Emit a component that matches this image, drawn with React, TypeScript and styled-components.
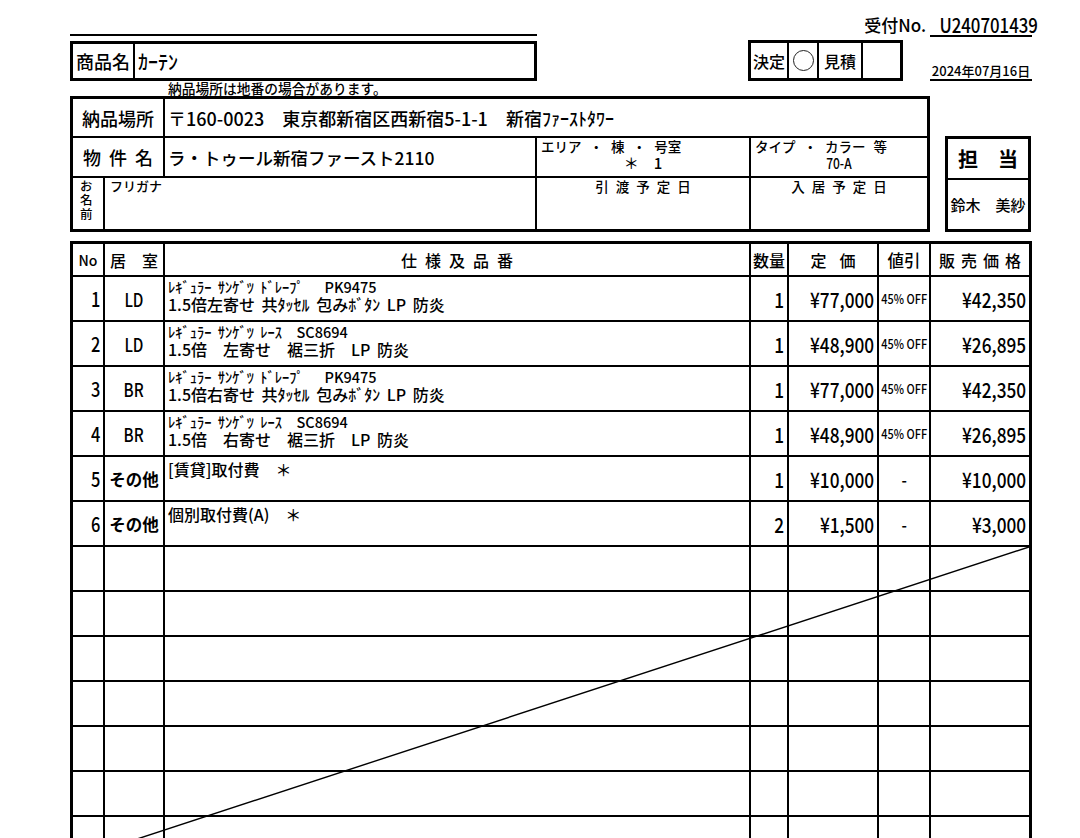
import React from "react";
import styled, { createGlobalStyle } from "styled-components";

const CJK = `"Noto Sans CJK JP", "Noto Sans", sans-serif`;

const GlobalStyle = createGlobalStyle`
  html, body { margin: 0; padding: 0; background: #fff; }
  body { font-family: ${CJK}; font-weight: 500; color: #000; }
  *, *::before, *::after { box-sizing: border-box; }
`;

/* condensed rendering of Latin figures, like the narrow gothic of the print form */
const Narrow = styled.span<{ $scale?: number; $origin?: string }>`
  display: inline-block;
  white-space: nowrap;
  transform: scaleX(${(p) => p.$scale ?? 0.82});
  transform-origin: ${(p) => p.$origin ?? "right"} center;
`;

const Page = styled.main`
  width: 962px;
  margin-left: 70px;
  padding-bottom: 24px;
`;

/* ---------- header ---------- */
const Header = styled.header`
  display: flex;
  justify-content: space-between;
  height: 96px;
`;

const HeaderLeft = styled.div`
  width: 467px;
  padding-top: 34px;
`;

const TopRule = styled.div`
  height: 2px;
  background: #000;
  margin-bottom: 5px;
`;

const ProductBox = styled.div`
  display: flex;
  height: 40px;
  border: 3px solid #000;
`;

const ProductLabel = styled.div`
  width: 62px;
  border-right: 2px solid #000;
  display: flex;
  align-items: center;
  justify-content: center;
  font-size: 18px;
`;

const ProductValue = styled.div`
  flex: 1;
  display: flex;
  align-items: center;
  padding-left: 3px;
  font-size: 20px;
`;

const Note = styled.div`
  height: 15px;
  line-height: 15px;
  padding-left: 98px;
  font-size: 13.75px;
  white-space: nowrap;
`;

const HeaderRight = styled.div`
  width: 284px;
  display: flex;
  flex-direction: column;
`;

const ReceiptLine = styled.div`
  height: 40px;
  display: flex;
  justify-content: flex-end;
  align-items: flex-end;
  padding-bottom: 3px;
`;

const ReceiptLabel = styled.span`
  font-size: 17px;
  line-height: 20px;
  margin: 0 4px 2px 0;
`;

const ReceiptValue = styled.span`
  width: 102px;
  border-bottom: 2px solid #000;
  text-align: center;
  font-size: 20px;
  line-height: 21px;
`;

const DecisionRow = styled.div`
  height: 41px;
  display: flex;
  justify-content: space-between;
  align-items: flex-start;
`;

const DecisionBox = styled.div`
  width: 155px;
  height: 41px;
  border: 3px solid #000;
  background: #000;
  display: grid;
  grid-template-columns: 36px 28px 42px minmax(0, 1fr);
  column-gap: 2px;
`;

const DecisionCell = styled.div`
  background: #fff;
  display: flex;
  align-items: center;
  justify-content: center;
  font-size: 16px;
`;

const Circle = styled.span`
  width: 21px;
  height: 21px;
  border: 1px solid #222;
  border-radius: 50%;
`;

const DateLine = styled.div`
  align-self: flex-end;
  width: 102px;
  border-bottom: 2px solid #000;
  text-align: center;
  font-size: 13px;
  line-height: 16px;
  white-space: nowrap;
`;

/* ---------- info block ---------- */
const InfoSection = styled.section`
  display: flex;
  align-items: flex-start;
`;

const InfoGrid = styled.div`
  width: 860px;
  height: 136px;
  border: 3px solid #000;
  background: #000;
  display: grid;
  grid-template-columns: 30px 58px 370px 212px minmax(0, 1fr);
  grid-template-rows: 37px 38px minmax(0, 1fr);
  gap: 2px;
`;

const FieldLabel = styled.div<{ $tracking?: number }>`
  grid-column: span 2;
  background: #fff;
  display: flex;
  align-items: center;
  justify-content: center;
  font-size: 18px;
  white-space: nowrap;
  letter-spacing: ${(p) => p.$tracking ?? 0}px;
  padding-left: ${(p) => p.$tracking ?? 0}px;
`;

const FieldValue = styled.div<{ $span: number; $size: number }>`
  grid-column: span ${(p) => p.$span};
  background: #fff;
  display: flex;
  align-items: center;
  padding-left: 3px;
  font-size: ${(p) => p.$size}px;
  white-space: pre;
`;

const SubField = styled.div`
  background: #fff;
  display: flex;
  flex-direction: column;
`;

const SubCaption = styled.div<{ $center?: boolean; $tracking?: number }>`
  font-size: 13.5px;
  line-height: 16px;
  white-space: pre;
  word-spacing: 5px;
  text-align: ${(p) => (p.$center ? "center" : "left")};
  padding-left: ${(p) => (p.$center ? p.$tracking ?? 0 : 4)}px;
  letter-spacing: ${(p) => p.$tracking ?? 0}px;
`;

const SubValue = styled.div`
  text-align: center;
  font-size: 15px;
  line-height: 18px;
  white-space: pre;
`;

const NameLabel = styled.div`
  background: #fff;
  display: flex;
  flex-direction: column;
  padding: 1px 0 0 7px;
  font-size: 12.5px;
  line-height: 14px;
`;

const Furigana = styled.div`
  grid-column: span 2;
  background: #fff;
  padding-left: 5px;
  font-size: 13px;
  line-height: 16px;
`;

const StaffBox = styled.aside`
  width: 86px;
  height: 96px;
  margin: 40px 0 0 15px;
  border: 3px solid #000;
  background: #000;
  display: grid;
  grid-template-rows: 39px minmax(0, 1fr);
  row-gap: 2px;
`;

const StaffTitle = styled.div`
  background: #fff;
  display: flex;
  align-items: center;
  justify-content: center;
  font-size: 20px;
  font-weight: 700;
  white-space: pre;
`;

const StaffName = styled.div`
  background: #fff;
  display: flex;
  align-items: center;
  justify-content: center;
  font-size: 15px;
  white-space: pre;
`;

/* ---------- items table ---------- */
const Table = styled.div`
  position: relative;
  margin-top: 9px;
  border: 3px solid #000;
  background: #000;
  display: grid;
  grid-template-columns: 30px 58px 584px 36px 88px 50px minmax(0, 1fr);
  grid-template-rows: 31px;
  grid-auto-rows: 43px;
  gap: 2px;
`;

const HeadCell = styled.div<{ $size?: number; $tracking?: number }>`
  background: #fff;
  display: flex;
  align-items: center;
  justify-content: center;
  font-size: ${(p) => p.$size ?? 16}px;
  letter-spacing: ${(p) => p.$tracking ?? 0}px;
  padding-left: ${(p) => p.$tracking ?? 0}px;
  white-space: pre;
`;

const NumCell = styled.div<{ $size?: number }>`
  background: #fff;
  display: flex;
  align-items: center;
  justify-content: flex-end;
  padding-right: 3px;
  font-size: ${(p) => p.$size ?? 21}px;
  white-space: nowrap;
`;

const RoomCell = styled.div<{ $jp?: boolean }>`
  background: #fff;
  display: flex;
  align-items: center;
  justify-content: center;
  font-size: ${(p) => (p.$jp ? 16.5 : 19)}px;
  font-weight: ${(p) => (p.$jp ? 700 : 500)};
  white-space: nowrap;
`;

const SpecCell = styled.div`
  background: #fff;
  display: flex;
  flex-direction: column;
  padding: 2px 0 0 3px;
`;

const SpecLine = styled.div<{ $size: number; $lh: number }>`
  font-size: ${(p) => p.$size}px;
  line-height: ${(p) => p.$lh}px;
  white-space: pre;
  word-spacing: 3px;
`;

const DiscountCell = styled.div<{ $small?: boolean }>`
  background: #fff;
  display: flex;
  align-items: center;
  justify-content: center;
  font-size: ${(p) => (p.$small ? 13 : 18)}px;
  white-space: nowrap;
`;

const EmptyCell = styled.div`
  background: #fff;
`;

const Strike = styled.svg`
  position: absolute;
  grid-column: 1 / -1;
  grid-row: 8 / span 7;
  inset: 0;
  width: 100%;
  height: 100%;
  display: block;
  pointer-events: none;
`;

type Item = {
  no: string;
  room: string;
  lines: string[];
  qty: string;
  price: string;
  discount: string;
  total: string;
};

const items: Item[] = [
  {
    no: "1",
    room: "LD",
    lines: ["ﾚｷﾞｭﾗｰ ｻﾝｹﾞﾂ ﾄﾞﾚｰﾌﾟ　 PK9475", "1.5倍左寄せ 共ﾀｯｾﾙ 包みﾎﾞﾀﾝ LP 防炎"],
    qty: "1",
    price: "¥77,000",
    discount: "45% OFF",
    total: "¥42,350",
  },
  {
    no: "2",
    room: "LD",
    lines: ["ﾚｷﾞｭﾗｰ ｻﾝｹﾞﾂ ﾚｰｽ　SC8694", "1.5倍　左寄せ　裾三折　LP 防炎"],
    qty: "1",
    price: "¥48,900",
    discount: "45% OFF",
    total: "¥26,895",
  },
  {
    no: "3",
    room: "BR",
    lines: ["ﾚｷﾞｭﾗｰ ｻﾝｹﾞﾂ ﾄﾞﾚｰﾌﾟ　 PK9475", "1.5倍右寄せ 共ﾀｯｾﾙ 包みﾎﾞﾀﾝ LP 防炎"],
    qty: "1",
    price: "¥77,000",
    discount: "45% OFF",
    total: "¥42,350",
  },
  {
    no: "4",
    room: "BR",
    lines: ["ﾚｷﾞｭﾗｰ ｻﾝｹﾞﾂ ﾚｰｽ　SC8694", "1.5倍　右寄せ　裾三折　LP 防炎"],
    qty: "1",
    price: "¥48,900",
    discount: "45% OFF",
    total: "¥26,895",
  },
  {
    no: "5",
    room: "その他",
    lines: ["[賃貸]取付費　＊"],
    qty: "1",
    price: "¥10,000",
    discount: "-",
    total: "¥10,000",
  },
  {
    no: "6",
    room: "その他",
    lines: ["個別取付費(A)　＊"],
    qty: "2",
    price: "¥1,500",
    discount: "-",
    total: "¥3,000",
  },
];

const EMPTY_ROWS = 7;

export default function App() {
  return (
    <>
      <GlobalStyle />
      <Page>
        <Header>
          <HeaderLeft>
            <TopRule />
            <ProductBox>
              <ProductLabel>商品名</ProductLabel>
              <ProductValue>ｶｰﾃﾝ</ProductValue>
            </ProductBox>
            <Note>納品場所は地番の場合があります。</Note>
          </HeaderLeft>
          <HeaderRight>
            <ReceiptLine>
              <ReceiptLabel>受付No.</ReceiptLabel>
              <ReceiptValue>
                <Narrow $scale={0.84} $origin="center">
                  U240701439
                </Narrow>
              </ReceiptValue>
            </ReceiptLine>
            <DecisionRow>
              <DecisionBox>
                <DecisionCell>決定</DecisionCell>
                <DecisionCell>
                  <Circle />
                </DecisionCell>
                <DecisionCell>見積</DecisionCell>
                <DecisionCell />
              </DecisionBox>
              <DateLine>2024年07月16日</DateLine>
            </DecisionRow>
          </HeaderRight>
        </Header>

        <InfoSection>
          <InfoGrid>
            <FieldLabel>納品場所</FieldLabel>
            <FieldValue $span={3} $size={18}>
              〒160-0023　東京都新宿区西新宿5-1-1　新宿ﾌｧｰｽﾄﾀﾜｰ
            </FieldValue>

            <FieldLabel $tracking={8}>物件名</FieldLabel>
            <FieldValue $span={1} $size={17.5}>
              ラ・トゥール新宿ファースト2110
            </FieldValue>
            <SubField>
              <SubCaption>エリア ・ 棟 ・ 号室</SubCaption>
              <SubValue>＊　1</SubValue>
            </SubField>
            <SubField>
              <SubCaption>タイプ ・ カラー 等</SubCaption>
              <SubValue>
                <Narrow $scale={0.8} $origin="center">
                  70-A
                </Narrow>
              </SubValue>
            </SubField>

            <NameLabel>
              <span>お</span>
              <span>名</span>
              <span>前</span>
            </NameLabel>
            <Furigana>フリガナ</Furigana>
            <SubField>
              <SubCaption $center $tracking={7}>
                引渡予定日
              </SubCaption>
            </SubField>
            <SubField>
              <SubCaption $center $tracking={7}>
                入居予定日
              </SubCaption>
            </SubField>
          </InfoGrid>

          <StaffBox>
            <StaffTitle>担　当</StaffTitle>
            <StaffName>鈴木　美紗</StaffName>
          </StaffBox>
        </InfoSection>

        <Table>
          <HeadCell $size={14}>No</HeadCell>
          <HeadCell>居　室</HeadCell>
          <HeadCell $tracking={8}>仕様及品番</HeadCell>
          <HeadCell $size={16}>数量</HeadCell>
          <HeadCell $tracking={13}>定価</HeadCell>
          <HeadCell $size={16.5}>値引</HeadCell>
          <HeadCell $tracking={6}>販売価格</HeadCell>

          {items.map((it) => (
            <React.Fragment key={it.no}>
              <NumCell $size={20}>
                <Narrow>{it.no}</Narrow>
              </NumCell>
              <RoomCell $jp={it.room === "その他"}>
                {it.room === "その他" ? (
                  it.room
                ) : (
                  <Narrow $scale={0.8} $origin="center">
                    {it.room}
                  </Narrow>
                )}
              </RoomCell>
              <SpecCell>
                {it.lines.length === 2 ? (
                  <>
                    <SpecLine $size={14.5} $lh={16}>
                      {it.lines[0]}
                    </SpecLine>
                    <SpecLine $size={16} $lh={18}>
                      {it.lines[1]}
                    </SpecLine>
                  </>
                ) : (
                  <SpecLine $size={16} $lh={20}>
                    {it.lines[0]}
                  </SpecLine>
                )}
              </SpecCell>
              <NumCell>
                <Narrow>{it.qty}</Narrow>
              </NumCell>
              <NumCell>
                <Narrow>{it.price}</Narrow>
              </NumCell>
              <DiscountCell $small={it.discount !== "-"}>
                <Narrow $scale={0.84} $origin="center">
                  {it.discount}
                </Narrow>
              </DiscountCell>
              <NumCell>
                <Narrow>{it.total}</Narrow>
              </NumCell>
            </React.Fragment>
          ))}

          {Array.from({ length: EMPTY_ROWS * 7 }).map((_, i) => (
            <EmptyCell key={`e${i}`} />
          ))}

          <Strike viewBox="0 0 100 100" preserveAspectRatio="none" aria-hidden="true">
            <line
              x1="100"
              y1="0"
              x2="0"
              y2="100"
              stroke="#000"
              strokeWidth="1.4"
              vectorEffect="non-scaling-stroke"
            />
          </Strike>
        </Table>
      </Page>
    </>
  );
}
